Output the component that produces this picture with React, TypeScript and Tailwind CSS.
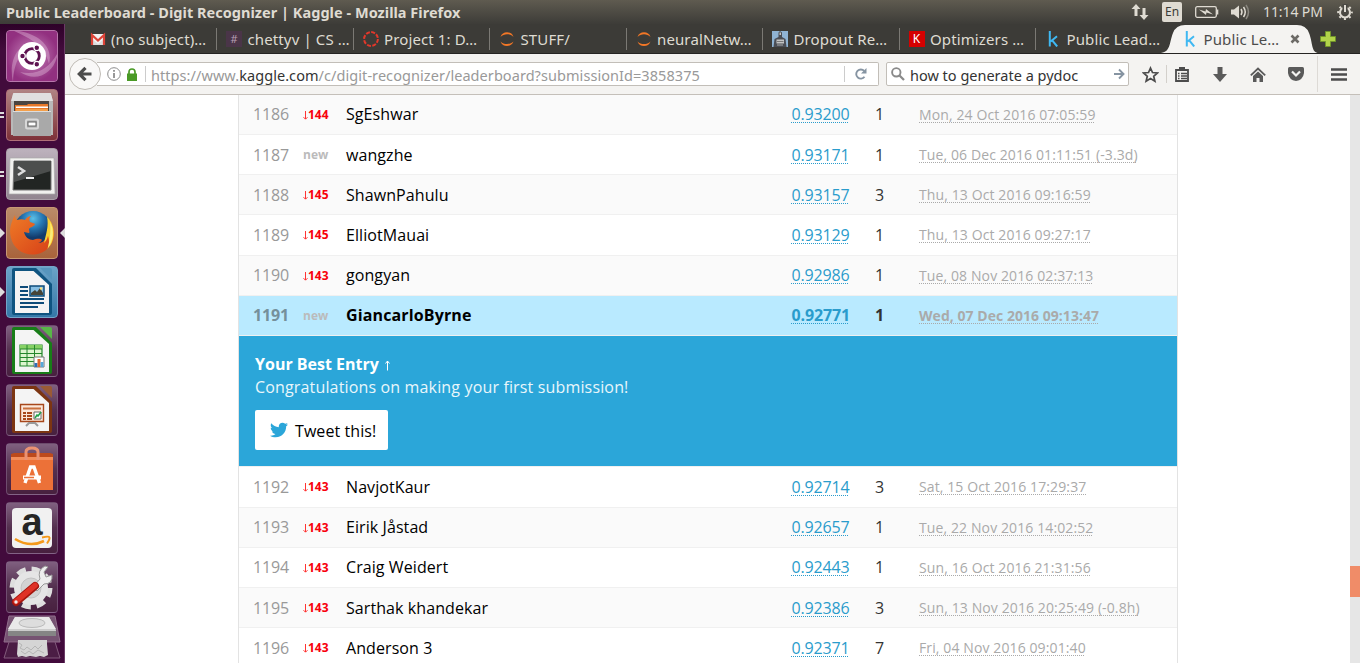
import type { ReactNode } from "react";
import { FaTwitter } from "react-icons/fa";

type Entry = {
  rank: number;
  change: string;
  name: string;
  score: string;
  entries: number;
  date: string;
  tall?: string;
  lift?: boolean;
  me?: boolean;
};

const before: Entry[] = [
  { rank: 1186, change: "144", name: "SgEshwar", score: "0.93200", entries: 1, date: "Mon, 24 Oct 2016 07:05:59", lift: true },
  { rank: 1187, change: "new", name: "wangzhe", score: "0.93171", entries: 1, date: "Tue, 06 Dec 2016 01:11:51 (-3.3d)" },
  { rank: 1188, change: "145", name: "ShawnPahulu", score: "0.93157", entries: 3, date: "Thu, 13 Oct 2016 09:16:59" },
  { rank: 1189, change: "145", name: "ElliotMauai", score: "0.93129", entries: 1, date: "Thu, 13 Oct 2016 09:27:17", tall: "h-[41px]" },
  { rank: 1190, change: "143", name: "gongyan", score: "0.92986", entries: 1, date: "Tue, 08 Nov 2016 02:37:13", lift: true },
  { rank: 1191, change: "new", name: "GiancarloByrne", score: "0.92771", entries: 1, date: "Wed, 07 Dec 2016 09:13:47", lift: true, me: true },
];

const after: Entry[] = [
  { rank: 1192, change: "143", name: "NavjotKaur", score: "0.92714", entries: 3, date: "Sat, 15 Oct 2016 17:29:37", tall: "h-[42px] border-t" },
  { rank: 1193, change: "143", name: "Eirik Jåstad", score: "0.92657", entries: 1, date: "Tue, 22 Nov 2016 14:02:52", lift: true },
  { rank: 1194, change: "143", name: "Craig Weidert", score: "0.92443", entries: 1, date: "Sun, 16 Oct 2016 21:31:56", lift: true },
  { rank: 1195, change: "143", name: "Sarthak khandekar", score: "0.92386", entries: 3, date: "Sun, 13 Nov 2016 20:25:49 (-0.8h)" },
  { rank: 1196, change: "143", name: "Anderson 3", score: "0.92371", entries: 7, date: "Fri, 04 Nov 2016 09:01:40" },
];

function Row({ e, shaded }: { e: Entry; shaded: boolean }) {
  const bg = e.me ? "bg-[#b9eaff] font-bold" : shaded ? "bg-[#fafafa]" : "bg-white";
  const lift = e.lift ? "pb-[2px]" : "";
  return (
    <div
      className={`grid shrink-0 grid-cols-[49px_44px_445px_84px_44px_1fr] items-center border-b border-[#f0f0f0] pl-[14px] text-[16px] leading-[22px] whitespace-nowrap ${e.tall ?? "h-10"} ${bg}`}
    >
      <span className={`tracking-[-0.15px] ${lift} ${e.me ? "text-[#75909b]" : "text-[#999]"}`}>{e.rank}</span>
      {e.change === "new" ? (
        <span className="pl-px text-[12px] leading-[22px] font-bold text-[#bbb]">new</span>
      ) : (
        <span className="flex items-center text-[12px] leading-[22px] font-bold text-[#f8000c]">
          <svg width="6" height="10" viewBox="0 0 6 10" className="mt-[2px]">
            <path d="M3.500 0v8M1.500 6.200l2 2 2-2" fill="none" stroke="#f33" strokeWidth="1" />
          </svg>
          {e.change}
        </span>
      )}
      <span className={`text-black ${lift} ${e.me ? "tracking-[0.130px]" : "tracking-[0.080px]"}`}>{e.name}</span>
      <span className={`pl-[0.5px] tracking-[-0.15px] text-[#2a9ccc] underline decoration-dotted decoration-1 underline-offset-[2px] [text-decoration-skip-ink:none] ${lift}`}>
        {e.score}
      </span>
      <span className={`text-[#333] ${lift}`}>{e.entries}</span>
      <span
        className={`text-[14px] text-[#aaa] underline decoration-dotted decoration-1 underline-offset-[2px] [text-decoration-skip-ink:none] ${e.me ? "tracking-[0.040px]" : "tracking-[0.110px]"}`}
      >
        {e.date}
      </span>
    </div>
  );
}

function Jupyter() {
  return (
    <svg width="16" height="16" viewBox="0 0 16 16">
      <path d="M1.500 6C2.500 2.800 5 1.300 8 1.300s5.500 1.500 6.500 4.700C12.600 4 10.500 3.200 8 3.200S3.400 4 1.500 6zM1.500 10.400c1.900 1.900 4 2.600 6.500 2.600s4.600-.7 6.500-2.600c-1 3-3.500 4.500-6.500 4.500s-5.500-1.500-6.500-4.500z" fill="#f37726" />
    </svg>
  );
}

function KMark() {
  return (
    <svg width="16" height="16" viewBox="0 0 16 16">
      <path d="M4.800 0v15.500M12 5.300L5.600 10.500M7.200 9.300l5 6.200" fill="none" stroke="#3fb8f2" strokeWidth="2" />
    </svg>
  );
}

const tabs: { label: string; icon: ReactNode }[] = [
  {
    label: "(no subject)…",
    icon: (
      <svg width="16" height="16" viewBox="0 0 16 16">
        <path d="M1 3h14v11H1z" fill="#f2f2f2" />
        <path d="M3 9l5 4 5-4v5H3z" fill="#ddd" />
        <path d="M2 14V4l6 5.500L14 4v10" fill="none" stroke="#dd4337" strokeWidth="2.200" />
      </svg>
    ),
  },
  {
    label: "chettyv | CS …",
    icon: <span className="flex h-4 w-4 items-center justify-center bg-[#4a3548] text-[11px] leading-4 text-[#b79fb3]">#</span>,
  },
  {
    label: "Project 1: D…",
    icon: (
      <svg width="16" height="16" viewBox="0 0 16 16">
        <circle cx="8" cy="8" r="6.900" fill="none" stroke="#e2382b" strokeWidth="2" strokeDasharray="4.020 1.400" />
      </svg>
    ),
  },
  { label: "STUFF/", icon: <Jupyter /> },
  { label: "neuralNetw…", icon: <Jupyter /> },
  {
    label: "Dropout Re…",
    icon: (
      <svg width="16" height="16" viewBox="0 0 16 16">
        <path d="M0 0h16v16H0z" fill="#8fb3d3" />
        <path d="M1.500 16l1-8L6.500 6V1.500L8 0l2 1.500V6l3.500 2 1 8z" fill="#4b4e55" />
        <path d="M7.500 1.500h1.500v2.500H7.500zM4.500 8.500h7.500v4H4.500z" fill="#c3c4c4" />
        <path d="M5 10.500h6.500" stroke="#777" />
        <path d="M5 14h6" stroke="#aaa" />
      </svg>
    ),
  },
  {
    label: "Optimizers …",
    icon: <span className="flex h-4 w-4 items-center justify-center bg-[#d50000] text-[12px] leading-4 text-white">K</span>,
  },
  { label: "Public Lead…", icon: <KMark /> },
];

const tile = "relative flex h-[52px] w-[52px] shrink-0 items-center justify-center overflow-hidden rounded-[4px] border";
const dim = "border-[#85658a]/60 bg-linear-to-b from-[#806080] via-[#54304f] to-[#48203f]";

function Office({ edge, fold, children }: { edge: string; fold: string; children: ReactNode }) {
  return (
    <svg width="52" height="52" viewBox="0 0 52 52" className="absolute -top-px -left-px">
      <path d="M6 4q0-2 2-2h22l16 16v29q0 2-2 2H8q-2 0-2-2z" fill={edge} />
      <path d="M9 5h18.500L43 19v28H9z" fill="#f4f4f4" />
      <path d="M34 2h10q2 0 2 2v10z" fill={fold} />
      {children}
    </svg>
  );
}

function Launcher() {
  return (
    <aside className="flex w-[65px] shrink-0 flex-col gap-[7px] overflow-hidden border-r border-[#6b3a66] bg-linear-to-b from-[#2e0229] via-[#420b3c] via-[4%] to-[#420b3c] pt-[6px] pl-[6px]">
      <div className={`${tile} border-[#b878ac] bg-[#98388a]`}>
        <svg width="52" height="52" viewBox="0 0 52 52" className="absolute -top-px -left-px">
          <defs>
            <radialGradient id="dash">
              <stop offset="0" stopColor="#c887bd" />
              <stop offset="1" stopColor="#923080" />
            </radialGradient>
          </defs>
          <path d="M0 0h52v52H0z" fill="url(#dash)" />
          <path d="M6 0C30 2 48 15 43 34 39 16 24 8 6 0zM52 22C49 44 30 53 14 42c17 4 30-4 38-20zM7 52C2 30 12 12 31 12 14 19 8 33 7 52z" fill="#e3bddc" opacity=".4" />
          <circle cx="26" cy="26" r="14" fill="#fff" />
          <circle cx="26" cy="26" r="7.300" fill="none" stroke="#5e1250" strokeWidth="2.800" />
          <g stroke="#fff" strokeWidth="1.200" fill="#5e1250">
            <circle cx="16.500" cy="26" r="2.800" />
            <circle cx="30.800" cy="17.800" r="2.800" />
            <circle cx="30.800" cy="34.200" r="2.800" />
          </g>
        </svg>
      </div>
      <div className={`${tile} border-[#b07078] bg-linear-to-b from-[#b08484] to-[#7d3038]`}>
        <svg width="52" height="52" viewBox="0 0 52 52" className="absolute -top-px -left-px">
          <path d="M7 5q0-1 1-1h36q1 0 1 1l2 8v33h-3v-1H8v1H5V13z" fill="#b9b9b9" />
          <path d="M7 5q0-1 1-1h36q1 0 1 1l2 7H5z" fill="#e0e0e0" />
          <path d="M8 12h35v10H8z" fill="#4b4541" />
          <path d="M9 16h12l1-1h20v7H9z" fill="#e8792a" />
          <path d="M10 17.500h32v1.500H10z" fill="#fff" />
          <path d="M10 20h32v2H10z" fill="#f4a04b" />
          <path d="M7 22h38v25H7z" fill="#a9a9a9" />
          <path d="M7 22h38v1H7z" fill="#ddd" />
          <rect x="20" y="30.500" width="12" height="9" rx="1.500" fill="none" stroke="#d8d8d8" strokeWidth="2" />
          <rect x="22" y="33" width="8" height="4" fill="#fff" stroke="#666" />
        </svg>
      </div>
      <div className={`${tile} border-[#aaa0a8] bg-linear-to-b from-[#bdb2bd] to-[#928690]`}>
        <svg width="52" height="52" viewBox="0 0 52 52" className="absolute -top-px -left-px">
          <path d="M4 10h44l1 36H3z" fill="#f1f1ef" stroke="#aaa" strokeWidth=".7" />
          <path d="M8 13h37v29H7z" fill="#222523" stroke="#777" />
          <path d="M8 13h37v10L8 34z" fill="#4c4e4d" />
          <path d="M12 19l6 4-6 4" fill="none" stroke="#ddd" strokeWidth="2.500" />
          <path d="M20 30h8" stroke="#eee" strokeWidth="2" />
        </svg>
      </div>
      <div className={`${tile} border-[#c79874] bg-linear-to-b from-[#ba8b69] to-[#a8633b]`}>
        <svg width="52" height="52" viewBox="0 0 52 52" className="absolute -top-px -left-px">
          <defs>
            <radialGradient id="globe" cx=".5" cy=".2">
              <stop offset="0" stopColor="#5cc0e6" />
              <stop offset=".5" stopColor="#2779b5" />
              <stop offset="1" stopColor="#123b6c" />
            </radialGradient>
            <linearGradient id="fox" x1="0" y1="0" x2="1" y2="1">
              <stop offset="0" stopColor="#ee7b27" />
              <stop offset="1" stopColor="#d63e17" />
            </linearGradient>
          </defs>
          <circle cx="27" cy="23" r="19" fill="url(#globe)" />
          <path d="M42 12c10 10 7 27-5 33-14 7-29-1-32-14C2 21 7 12 9 8c0 3 1 4 2 5 3-1 6-1 8 0 1-2 4-4 6-4-2 2-2 4-1 6 2 1 4 1 5 2-1 3-5 3-6 5 0 2 1 3 0 4l-5-1c1 5 5 8 9 8 3-1 7-2 9 0-1 2-3 3-4 3 8 0 12-10 11-18z" fill="url(#fox)" />
          <path d="M41 10c9 8 9 25 0 32 3-5 2-10 1-13-1 4-3 6-4 7 2-9 5-17 3-26z" fill="#fad132" />
          <path d="M44 15c5 9 3 19-2 26 2-10 3-17 2-26z" fill="#f9ed7b" />
        </svg>
      </div>
      <div className={`${tile} border-[#73a5c8] bg-linear-to-b from-[#6ba3c8] to-[#3478a8]`}>
        <Office edge="#0f5480" fold="#5695bd">
          <path d="M14 21h8M14 25h8M14 29h8M14 33h24M14 37h24M14 41h18" stroke="#0d4b79" strokeWidth="2" />
          <path d="M24 20h14v10H24z" fill="#86bee2" stroke="#0d4b79" strokeWidth="1.500" />
          <path d="M25 29v-2l4-3 2 2 3-4 3 5v2z" fill="#454438" />
          <circle cx="35" cy="22.500" r="1.200" fill="#ffe073" />
        </Office>
      </div>
      <div className={`${tile} ${dim}`}>
        <Office edge="#187d18" fold="#58b648">
          <path d="M14 20h22v21H14z" fill="#ddf5cf" stroke="#23862a" strokeWidth="1.200" />
          <path d="M14 20h22v4H14z" fill="#86d165" />
          <path d="M14 24h22M14 28.500h22M14 32.500h22M14 36.500h22M21 20v21M28.500 20v21" stroke="#23862a" />
          <path d="M28 32h10v10H28z" fill="#fff" stroke="#777" />
          <path d="M30 42v-4" stroke="#2d6fb5" strokeWidth="3" />
          <path d="M33 42v-8" stroke="#e2652a" strokeWidth="3" />
          <path d="M36 42v-5" stroke="#58a8db" strokeWidth="3" />
        </Office>
      </div>
      <div className={`${tile} ${dim}`}>
        <Office edge="#7c3512" fold="#9a5a35">
          <path d="M14.500 20.500h23v17h-23z" fill="#fbe7da" stroke="#a7471b" strokeWidth="1.400" />
          <path d="M17 24.500h18" stroke="#c9703f" strokeWidth="2" />
          <path d="M17 29h3M17 32h3M17 35h3M21 29h5M21 32h5M21 35h5" stroke="#a7471b" strokeWidth="2" />
          <path d="M28 28h7v7h-7z" fill="#fff" stroke="#666" />
          <path d="M29 34l2-3 1 1 3-4" stroke="#20a34a" fill="none" strokeWidth="1.500" />
          <path d="M20 42l3-3h6l3 3" stroke="#999" strokeWidth="2" fill="none" />
        </Office>
      </div>
      <div className={`${tile} ${dim}`}>
        <svg width="52" height="52" viewBox="0 0 52 52" className="absolute -top-px -left-px">
          <path d="M5 11l3-1h36l3 1v7H5z" fill="#bd4a1c" />
          <path d="M5 14h42v33H5z" fill="#ec7138" />
          <path d="M5 14h42v3H5z" fill="#f48d5a" />
          <path d="M20 17V9q0-4 6-4t6 4v8" fill="none" stroke="#ea9273" strokeWidth="3" />
          <path d="M19 40L24.500 24h3.500l5.500 16" fill="none" stroke="#fff" strokeWidth="3.400" />
          <path d="M17 34.500h18" stroke="#fff" strokeWidth="4" />
          <path d="M18 34.500h10" stroke="#ec7138" strokeWidth="1.500" />
        </svg>
      </div>
      <div className={`${tile} ${dim}`}>
        <span className="relative flex h-10 w-10 items-start justify-center rounded-[4px] bg-[#f1f1f1] font-['Liberation_Sans',sans-serif] text-[38px] leading-10 font-bold text-[#252525]">
          <span className="relative -top-[6px]">a</span>
          <svg width="40" height="14" viewBox="0 0 40 14" className="absolute bottom-0 left-0">
            <path d="M3 5q15 9 29 2" fill="none" stroke="#f49a1c" strokeWidth="2.600" />
            <path d="M30 3.500q7-1.500 7.500 0t-2.500 6" fill="none" stroke="#f49a1c" strokeWidth="2" />
          </svg>
        </span>
      </div>
      <div className={`${tile} ${dim}`}>
        <svg width="52" height="52" viewBox="0 0 52 52" className="absolute -top-px -left-px">
          <circle cx="25" cy="27" r="18" fill="none" stroke="#dedede" strokeWidth="7" strokeDasharray="8.500 5.640" />
          <circle cx="25" cy="27" r="17" fill="#e5e5e5" />
          <circle cx="25" cy="27" r="10" fill="#d3d3d3" stroke="#c2c2c2" />
          <path d="M27 26l7-8q-3-9 5-13l3 1-4 5 2 5 6-2q1 9-8 9L31 30z" fill="#eee" stroke="#999" />
          <path d="M10 41l19-16" stroke="#a5160e" strokeWidth="8" strokeLinecap="round" />
          <path d="M10 40.500l19-16" stroke="#df3227" strokeWidth="5.500" strokeLinecap="round" />
          <circle cx="10" cy="41" r="1.700" fill="#eee" />
        </svg>
      </div>
      <div className="-mt-[5px] -ml-[3px] h-[50px] w-[58px] shrink-0">
        <svg width="58" height="46" viewBox="0 0 58 46">
          <path d="M6 1h46l5 26H1z" fill="#765372" stroke="#916f8c" />
          <path d="M6 27h46l5 16H1z" fill="#4b1d45" stroke="#825b7c" />
          <path d="M12 2h34l7 13v5H5v-5z" fill="#ccc" />
          <path d="M12 2h34l7 12H5z" fill="#e9e9e9" />
          <ellipse cx="29" cy="8" rx="13" ry="4.500" fill="#ddd" stroke="#bbb" />
          <path d="M5 16h48v5H5z" fill="#858585" />
          <path d="M15 25h29v4l1 11-4 2-4-1-4 1-6-1-4 1-4-1-4 1-1-3z" fill="#d5d5d5" />
          <path d="M16 28l3 2-2 3 4 2 3-3 4 3 4-4 3 3 4-4M18 36l4 3 4-3 4 3 5-4 6 3" stroke="#b5b5b5" fill="none" />
        </svg>
      </div>
    </aside>
  );
}

function Pips() {
  return (
    <svg width="5" height="640" viewBox="0 0 5 640" className="absolute top-6 left-0">
      <path d="M0 89h4M0 93h4M0 148h4M0 152h4" stroke="#ddd" strokeWidth="2" />
      <path d="M0 204l5 5-5 5zM0 263l5 5-5 5z" fill="#ddd" />
    </svg>
  );
}

function TitleBar() {
  return (
    <header className="flex h-6 shrink-0 items-center justify-between bg-linear-to-b from-[#5f5b50] to-[#3d3c38] pr-[7px] pl-[6px] text-[#dfdbd2]">
      <span className="text-[14.500px] leading-6 font-bold tracking-[0.030px] whitespace-nowrap">
        Public Leaderboard - Digit Recognizer | Kaggle - Mozilla Firefox
      </span>
      <div className="flex items-center">
        <svg width="18" height="18" viewBox="0 0 18 18">
          <path d="M5 1l4.500 5H6.500v7h-3V6H.5zM13 17l4.500-5h-3V5h-3v7h-3z" fill="#dfdbd2" />
        </svg>
        <span className="ml-[13px] flex h-5 w-5 items-center justify-center rounded-[2px] bg-[#dfdbd2] text-[12px] text-[#3c3b37]">En</span>
        <svg width="24" height="12" viewBox="0 0 24 12" className="ml-[13px]">
          <rect x=".7" y=".7" width="20.600" height="10.600" rx="1.500" fill="none" stroke="#dfdbd2" strokeWidth="1.300" />
          <path d="M22.500 3.500v5" stroke="#dfdbd2" strokeWidth="1.600" />
          <path d="M4 3.500l6.500 2L11 3l7 5.500-6.500-2L11 9z" fill="#dfdbd2" />
        </svg>
        <svg width="20" height="16" viewBox="0 0 20 16" className="ml-[12px]">
          <path d="M0 5.500h3l5-4v13l-5-4H0z" fill="#dfdbd2" />
          <path d="M10 5q2 3 0 6M12.500 3q3.500 5 0 10" fill="none" stroke="#dfdbd2" strokeWidth="1.500" />
          <path d="M15 1q5 7 0 14" fill="none" stroke="#8a877f" strokeWidth="1.500" />
        </svg>
        <span className="ml-[12px] w-[60px] text-[14px] leading-6 tracking-[-0.1px] whitespace-nowrap">11:14 PM</span>
        <svg width="16" height="16" viewBox="0 0 16 16" className="ml-[14px]">
          <path d="M5.700 4a5 5 0 1 0 4.600 0" fill="none" stroke="#dfdbd2" strokeWidth="2" />
          <circle cx="8" cy="8.300" r="6.800" fill="none" stroke="#dfdbd2" strokeWidth="2" strokeDasharray="2 3.340" strokeDashoffset="1" />
          <path d="M8 0v8" stroke="#4a4843" strokeWidth="5" />
          <path d="M8 1v7" stroke="#dfdbd2" strokeWidth="2" />
        </svg>
      </div>
    </header>
  );
}

function TabBar() {
  return (
    <div className="flex h-[30px] shrink-0 items-center border-b border-[#252422] bg-[#3c3b37] pt-px pl-[15.500px]">
      {tabs.map((t, i) => (
        <div key={i} className="flex h-[22px] w-[136.500px] shrink-0 items-center">
          <span className="flex w-[30.500px] shrink-0 items-center pl-[9px]">{t.icon}</span>
          <span className="grow text-[15px] leading-5 tracking-[0.120px] whitespace-nowrap text-[#dfdbd2]">{t.label}</span>
          {i < 7 && <span className="h-[22px] w-px shrink-0 bg-[#7b7974]" />}
        </div>
      ))}
      <div className="relative flex h-[28px] w-[139px] shrink-0 items-center">
        <svg width="160" height="29" viewBox="0 0 160 29" className="absolute -top-px -left-[14px]">
          <path d="M0 29C12 29 10 19 14 9q3-8 12-8H138q9 0 12 8c4 10 2 20 10 20z" fill="#f4f3f1" />
        </svg>
        <span className="relative ml-[9px]">
          <KMark />
        </span>
        <span className="relative ml-[6px] w-[86px] text-[15px] leading-5 tracking-[0.120px] whitespace-nowrap text-[#4c4c4c]">Public Le…</span>
        <svg width="10" height="10" viewBox="0 0 10 10" className="relative">
          <path d="M1.500 1.500l7 7M8.500 1.500l-7 7" stroke="#6c6a66" strokeWidth="2.600" />
        </svg>
      </div>
      <svg width="16" height="16" viewBox="0 0 16 16" className="ml-[8px]">
        <path d="M5.500.500h5v5h5v5h-5v5h-5v-5h-5v-5h5z" fill="#b2d34a" stroke="#71942a" />
      </svg>
    </div>
  );
}

function Toolbar() {
  return (
    <div className="flex h-[41px] shrink-0 items-center border-b border-[#c4bfb9] bg-[#f4f3f1]">
      <div className="relative ml-[4px] flex h-8 w-8 shrink-0 items-center justify-center rounded-full border border-[#bfbbb5] bg-[#f9f8f7]">
        <svg width="16" height="16" viewBox="0 0 16 16">
          <path d="M14.500 8H3M8.500 1.800L2.300 8l6.200 6.200" fill="none" stroke="#4c4c4c" strokeWidth="3.200" />
        </svg>
      </div>
      <div className="-ml-[4px] flex h-6 w-[782px] items-center rounded-r-[2px] border border-l-0 border-[#c2beb8] bg-white">
        <svg width="14" height="14" viewBox="0 0 14 14" className="ml-[10px]">
          <circle cx="7" cy="7" r="6.300" fill="none" stroke="#8c8c8c" />
          <path d="M7 6v5M7 3v1.800" stroke="#777" strokeWidth="1.500" />
        </svg>
        <svg width="10" height="13" viewBox="0 0 10 13" className="ml-[6px]">
          <path d="M0 5.500h10V13H0z" fill="#4a9a26" />
          <path d="M2 6V4q0-3 3-3t3 3v2" fill="none" stroke="#4a9a26" strokeWidth="1.700" />
        </svg>
        <span className="ml-[8px] h-4 w-px bg-[#ccc]" />
        <span className="ml-[5px] grow pt-px text-[14.500px] leading-5 tracking-[0.060px] whitespace-nowrap text-[#999]">
          https://www.<span className="text-[#333]">kaggle.com</span>/c/digit-recognizer/leaderboard?submissionId=3858375
        </span>
        <span className="h-4 w-px bg-[#ccc]" />
        <svg width="12" height="12" viewBox="0 0 12 12" className="mr-[11px] ml-[10px]">
          <path d="M9.500 8.800A4.600 4.600 0 1 1 9.200 2.900" fill="none" stroke="#8694a2" strokeWidth="1.900" />
          <path d="M11.500 0v5.500H6z" fill="#8694a2" />
        </svg>
      </div>
      <div className="ml-[7px] flex h-6 w-[243px] items-center rounded-[2px] border border-[#c2beb8] bg-white">
        <svg width="14" height="14" viewBox="0 0 14 14" className="ml-[4px]">
          <circle cx="5.300" cy="5.300" r="4.200" fill="none" stroke="#8a8a8a" strokeWidth="1.900" />
          <path d="M8.500 8.500l4.500 4.500" stroke="#8a8a8a" strokeWidth="2.300" />
        </svg>
        <span className="ml-[5px] grow pt-px text-[14.500px] leading-5 whitespace-nowrap text-[#333]">how to generate a pydoc</span>
        <svg width="11" height="12" viewBox="0 0 11 12" className="mr-[3px]">
          <path d="M0 6h9M5 1.500L9.500 6 5 10.500" fill="none" stroke="#8694a2" strokeWidth="1.900" />
        </svg>
      </div>
      <svg width="17" height="17" viewBox="0 0 17 17" className="ml-[13px]">
        <path d="M8.500 2l2 4.500 5 .5-3.800 3.300 1.200 4.900-4.400-2.600-4.400 2.600 1.200-4.900L1.500 7l5-.5z" fill="none" stroke="#4c4c4c" strokeWidth="1.700" />
      </svg>
      <span className="ml-[7px] h-[18px] w-px bg-[#d3d0cb]" />
      <svg width="14" height="15" viewBox="0 0 14 15" className="ml-[8px]">
        <path d="M1 3h12v11H1z" fill="none" stroke="#4c4c4c" strokeWidth="1.800" />
        <path d="M4 0h6v4H4z" fill="#4c4c4c" />
        <path d="M3 6.500h1.500M3 9h1.500M3 11.500h1.500M6 6.500h6M6 9h6M6 11.500h6" stroke="#4c4c4c" strokeWidth="1.300" />
      </svg>
      <svg width="14" height="15" viewBox="0 0 14 15" className="ml-[24px]">
        <path d="M4.500 0h5v7H14l-7 8-7-8h4.500z" fill="#5a5a5a" />
      </svg>
      <svg width="16" height="15" viewBox="0 0 16 15" className="ml-[23px]">
        <path d="M.8 8.300L8 1.500l7.200 6.800" fill="none" stroke="#5a5a5a" strokeWidth="1.800" />
        <path d="M3 9l5-4.500L13 9v6H9.500v-4h-3v4H3z" fill="#5a5a5a" />
      </svg>
      <svg width="16" height="14" viewBox="0 0 16 14" className="ml-[22px]">
        <path d="M1.500 0h13Q16 0 16 1.500V6q-1 7-8 8-7-1-8-8V1.500Q0 0 1.500 0z" fill="#5a5a5a" />
        <path d="M4 4.500l4 4 4-4" fill="none" stroke="#f4f3f1" strokeWidth="2.200" />
      </svg>
      <span className="ml-[13px] h-9 w-px bg-[#dddad6]" />
      <svg width="16" height="13" viewBox="0 0 16 13" className="ml-[13px]">
        <path d="M0 1.500h16M0 6.500h16M0 11.500h16" stroke="#4c4c4c" strokeWidth="2.600" />
      </svg>
    </div>
  );
}

export default function App() {
  return (
    <div className="relative flex h-[663px] w-[1360px] flex-col overflow-hidden bg-white font-['Noto_Sans','Open_Sans',sans-serif]">
      <TitleBar />
      <div className="flex min-h-0 grow">
        <Launcher />
        <div className="flex min-w-0 grow flex-col">
          <TabBar />
          <Toolbar />
          <main className="flex min-h-0 grow justify-between font-['Open_Sans',sans-serif]">
            <div className="ml-[173px] flex w-[940px] flex-col overflow-hidden border-x border-[#e3e3e3]">
              {before.map((e, i) => (
                <Row key={e.rank} e={e} shaded={i % 2 === 0} />
              ))}
              <section className="h-[130px] shrink-0 bg-[#2ba6d9] px-4 pt-[17px] text-[16px] leading-[23px] text-white">
                <h2 className="flex items-center font-bold">
                  Your Best Entry
                  <svg width="7" height="11" viewBox="0 0 7 11" className="mt-px ml-[5px]">
                    <path d="M3.500 10.500V1M1.500 3.500l2-2.500 2 2.500" fill="none" stroke="#fff" strokeWidth="1" />
                  </svg>
                </h2>
                <p className="tracking-[0.155px] text-[#e9f6fb]">Congratulations on making your first submission!</p>
                <button className="mt-[11px] flex h-10 w-[133px] items-center rounded-[2px] bg-white pl-[15px] text-black">
                  <FaTwitter size={18} color="#2ba6d9" />
                  <span className="ml-[7px] pt-[2px] tracking-[0.080px] whitespace-nowrap">Tweet this!</span>
                </button>
              </section>
              {after.map((e, i) => (
                <Row key={e.rank} e={e} shaded={i % 2 === 1} />
              ))}
            </div>
            <div className="w-[10px] bg-[#e6e6e6] pt-[471px]">
              <div className="h-[31px] bg-[#f08c68]" />
            </div>
          </main>
        </div>
      </div>
      <Pips />
      <svg width="5" height="10" viewBox="0 0 5 10" className="absolute top-[228px] left-[60px]">
        <path d="M5 0v10L0 5z" fill="#ddd" />
      </svg>
    </div>
  );
}
